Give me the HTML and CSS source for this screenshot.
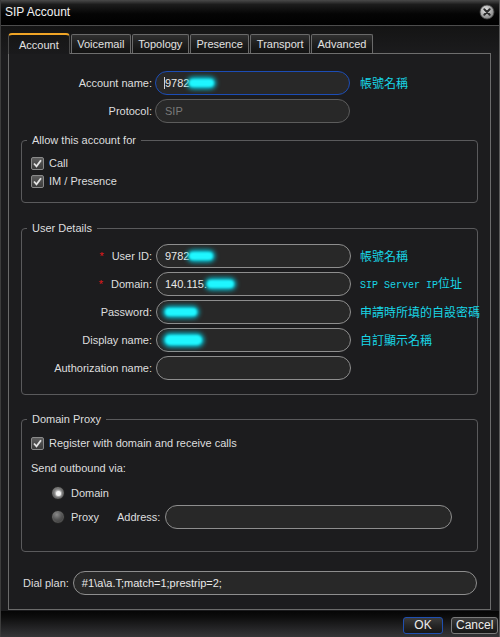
FILE: index.html
```html
<!DOCTYPE html>
<html>
<head>
<meta charset="utf-8">
<title>SIP Account</title>
<link rel="stylesheet" href="styles.css">
</head>
<body>
<div class="window">
  <div class="titlebar">
    <span class="title">SIP Account</span>
    <svg class="close" width="16" height="16" viewBox="0 0 16 16">
      <defs>
        <radialGradient id="cg" cx="0.4" cy="0.35" r="0.7">
          <stop offset="0" stop-color="#e8e8e8"/>
          <stop offset="1" stop-color="#7a7a7a"/>
        </radialGradient>
      </defs>
      <circle cx="8" cy="8" r="7" fill="url(#cg)" stroke="#444" stroke-width="0.8"/>
      <path d="M5.3 5.3 L10.7 10.7 M10.7 5.3 L5.3 10.7" stroke="#2a2a2a" stroke-width="2" stroke-linecap="round"/>
    </svg>
  </div>
  <div class="body">
    <div class="tabs">
      <div class="tab active">Account</div>
      <div class="tab">Voicemail</div>
      <div class="tab">Topology</div>
      <div class="tab">Presence</div>
      <div class="tab">Transport</div>
      <div class="tab">Advanced</div>
    </div>
    <div class="panel">
      <div class="form-grid top-grid">
        <label class="lbl">Account name:</label>
        <div class="input focus"><span class="caret"></span>9782<span class="blob" style="width:25px"></span></div>
        <div class="note">帳號名稱</div>
        <label class="lbl">Protocol:</label>
        <div class="input disabled">SIP</div>
        <div class="note"></div>
      </div>

      <fieldset class="group allow">
        <legend>Allow this account for</legend>
        <div class="check-row">
          <span class="cb"><svg width="11" height="11" viewBox="0 0 11 11"><path d="M2 5.5 L4.5 8.3 L9 2.3" fill="none" stroke="#e4e4e4" stroke-width="1.8"/></svg></span>
          <span>Call</span>
        </div>
        <div class="check-row">
          <span class="cb"><svg width="11" height="11" viewBox="0 0 11 11"><path d="M2 5.5 L4.5 8.3 L9 2.3" fill="none" stroke="#e4e4e4" stroke-width="1.8"/></svg></span>
          <span>IM / Presence</span>
        </div>
      </fieldset>

      <fieldset class="group details">
        <legend>User Details</legend>
        <div class="form-grid inner-grid">
          <label class="lbl"><span class="req">*</span>User ID:</label>
          <div class="input">9782<span class="blob" style="width:24px"></span></div>
          <div class="note">帳號名稱</div>

          <label class="lbl"><span class="req">*</span>Domain:</label>
          <div class="input">140.115.<span class="blob" style="width:27px"></span></div>
          <div class="note"><span class="mono">SIP Server IP</span>位址</div>

          <label class="lbl">Password:</label>
          <div class="input"><span class="blob" style="width:32px"></span></div>
          <div class="note">申請時所填的自設密碼</div>

          <label class="lbl">Display name:</label>
          <div class="input"><span class="blob tall" style="width:37px"></span></div>
          <div class="note">自訂顯示名稱</div>

          <label class="lbl">Authorization name:</label>
          <div class="input"></div>
          <div class="note"></div>
        </div>
      </fieldset>

      <fieldset class="group proxy">
        <legend>Domain Proxy</legend>
        <div class="check-row">
          <span class="cb"><svg width="11" height="11" viewBox="0 0 11 11"><path d="M2 5.5 L4.5 8.3 L9 2.3" fill="none" stroke="#e4e4e4" stroke-width="1.8"/></svg></span>
          <span>Register with domain and receive calls</span>
        </div>
        <div class="plain-row">Send outbound via:</div>
        <div class="radio-row first">
          <span class="radio on"></span>
          <span>Domain</span>
        </div>
        <div class="radio-row second">
          <span class="radio"></span>
          <span class="proxy-lbl">Proxy</span>
          <span class="addr-lbl">Address:</span>
          <div class="input addr"></div>
        </div>
      </fieldset>

      <div class="dial-row">
        <span class="dial-lbl">Dial plan:</span>
        <div class="input dial">#1\a\a.T;match=1;prestrip=2;</div>
      </div>
    </div>
  </div>
  <div class="footer">
    <button class="btn ok">OK</button>
    <button class="btn cancel">Cancel</button>
  </div>
</div>
</body>
</html>
```

FILE: styles.css
```css
* { box-sizing: border-box; }

html, body {
  margin: 0;
  padding: 0;
  background: #000;
}

body {
  font-family: "Liberation Sans", Arial, sans-serif;
  font-size: 11px;
  color: #dedede;
}

.window {
  width: 500px;
  height: 637px;
  display: flex;
  flex-direction: column;
  background: #1c1c1e;
  border-left: 1px solid #3c3c3c;
  border-right: 1px solid #5a5a5a;
  overflow: hidden;
}

.titlebar {
  height: 26px;
  flex: none;
  display: flex;
  align-items: center;
  justify-content: space-between;
  padding: 0 4px 0 4px;
  background: linear-gradient(to bottom, #4a4a4a 0%, #1c1c1c 18%, #050505 55%, #000 100%);
  border-bottom: 1px solid #4c4c4c;
}

.title {
  font-size: 12px;
  color: #f2f2f2;
  padding-bottom: 1px;
}

.close {
  display: block;
  margin-top: -1px;
}

.body {
  flex: 1;
  padding: 7px 8px 0 7px;
  background: linear-gradient(to bottom, #141414 0px, #1c1c1e 30px, #1c1c1e 100%);
  display: flex;
  flex-direction: column;
}

/* Tabs */
.tabs {
  display: flex;
  align-items: flex-end;
  gap: 1px;
  height: 20px;
  flex: none;
}

.tab {
  height: 19px;
  padding: 0 5.5px;
  display: flex;
  align-items: center;
  color: #e2e2e2;
  font-size: 11px;
  border: 1px solid #6a6a6a;
  border-bottom: none;
  border-radius: 2px 2px 0 0;
  background: linear-gradient(to bottom, #303030 0%, #1e1e1e 50%, #121212 100%);
  white-space: nowrap;
}

.tab.active {
  position: relative;
  z-index: 1;
  height: 21px;
  margin-bottom: -1px;
  padding: 0 10px;
  border-color: #4a4a4a;
  border-top: 2px solid #f0a526;
  border-radius: 4px 4px 0 0;
  background: linear-gradient(to bottom, #161616 0%, #1a1a1c 100%);
}

/* Panel */
.panel {
  width: 483px;
  height: 557px;
  flex: none;
  border: 1px solid #6a6a6a;
  border-top-color: #6e6e6e;
  background: #1c1c1e;
  padding: 17px 12px 14px 12px;
  display: flex;
  flex-direction: column;
}

.form-grid {
  display: grid;
  grid-auto-rows: 24px;
  row-gap: 4px;
  align-items: center;
}

.top-grid {
  grid-template-columns: 134px 195px 1fr;
}

.inner-grid {
  grid-template-columns: 125px 195px 1fr;
}

.lbl {
  text-align: right;
  padding-right: 4px;
  white-space: nowrap;
  color: #dedede;
}

.top-grid .lbl { padding-right: 3px; }

.req {
  color: #e0191b;
  margin-right: 8px;
  font-size: 11px;
}

.input {
  height: 24px;
  border: 1px solid #8e8e8e;
  border-radius: 12px;
  background: #282828;
  color: #e8e8e8;
  display: flex;
  align-items: center;
  padding-left: 8px;
  white-space: nowrap;
  font-size: 11px;
}

.input.focus {
  border-color: #1c4db6;
}

.input.disabled {
  border-color: #5c5c5c;
  color: #7a7a7a;
  padding-left: 9px;
}

.caret {
  display: inline-block;
  width: 1px;
  height: 12px;
  background: #d0d0d0;
  margin-right: 0;
}

.blob {
  display: inline-block;
  height: 8px;
  border-radius: 5px;
  background: #1ff6ff;
  box-shadow: 0 0 4px 2px #00cfe4;
  filter: blur(1px);
}

.blob.tall { height: 10px; }

.note {
  padding-left: 9px;
  color: #18d6e6;
  font-family: "Noto Sans CJK TC", "Noto Sans CJK SC", sans-serif;
  font-size: 12px;
  white-space: nowrap;
  line-height: 14px;
}

.top-grid .note { padding-left: 10px; }

.mono {
  font-family: "Liberation Mono", monospace;
  font-size: 10px;
}

/* Groups */
.group {
  margin: 0;
  min-width: 0;
  border: 1px solid #5a5a5c;
  border-radius: 4px;
  padding: 7px 9px 12px 9px;
}

.group legend {
  font-size: 11px;
  line-height: 13px;
  padding: 0 5px;
  margin-left: -4px;
  color: #dedede;
}

.allow { margin-top: 11px; }

.details {
  margin-top: 19px;
  padding: 9px 9px 14px 9px;
}

.proxy {
  margin-top: 18px;
  padding: 8px 9px 22px 9px;
}

.check-row {
  height: 18px;
  display: flex;
  align-items: center;
  gap: 5px;
}

.cb {
  width: 13px;
  height: 13px;
  flex: none;
  border: 1px solid #8a8a8a;
  border-radius: 2px;
  background: linear-gradient(to bottom, #5e5e5e, #3a3a3a);
  display: flex;
  align-items: center;
  justify-content: center;
}

.cb svg { display: block; }

.plain-row {
  height: 18px;
  margin-top: 7px;
  display: flex;
  align-items: center;
}

.radio-row {
  display: flex;
  align-items: center;
  padding-left: 20px;
}

.radio-row.first {
  height: 18px;
  margin-top: 7px;
}

.radio-row.second {
  height: 24px;
  margin-top: 3px;
}

.radio {
  width: 14px;
  height: 14px;
  flex: none;
  border-radius: 50%;
  border: 1px solid #222;
  background: radial-gradient(circle at 40% 30%, #8a8a8a 0%, #555 45%, #2e2e2e 100%);
  box-shadow: inset 0 0 0 1px rgba(255,255,255,0.08);
  margin-right: 6px;
  display: flex;
  align-items: center;
  justify-content: center;
}

.radio.on {
  background: radial-gradient(circle at 45% 40%, #9a9a9a 0%, #666 50%, #3a3a3a 100%);
}

.radio.on::after {
  content: "";
  width: 5px;
  height: 5px;
  border-radius: 50%;
  background: #f4f4f4;
  box-shadow: 0 0 2px 1px rgba(255,255,255,0.6);
}

.proxy-lbl { width: 46px; }

.addr-lbl { margin-right: 5px; }

.input.addr {
  width: 287px;
}

.dial-row {
  margin-top: 19px;
  display: flex;
  align-items: center;
  padding-left: 2px;
}

.dial-lbl {
  margin-right: 4px;
}

.input.dial {
  width: 404px;
}

/* Footer */
.footer {
  height: 26px;
  flex: none;
  display: flex;
  justify-content: flex-end;
  align-items: flex-start;
  gap: 8px;
  padding: 6px 1px 0 0;
  background: linear-gradient(to bottom, #050505 0%, #0e0e0e 25%, #262628 70%, #353537 100%);
}

.btn {
  height: 17px;
  font-family: "Liberation Sans", Arial, sans-serif;
  font-size: 12px;
  color: #ececec;
  border-radius: 3px;
  padding: 0 4px;
  background: linear-gradient(to bottom, #3c3c3c 0%, #262626 50%, #161616 100%);
  line-height: 15px;
  margin: 0;
}

.btn.ok {
  width: 40px;
  border: 1px solid #1f4fb0;
}

.btn.cancel {
  width: 47px;
  border: 1px solid #7a7a7a;
}
```
